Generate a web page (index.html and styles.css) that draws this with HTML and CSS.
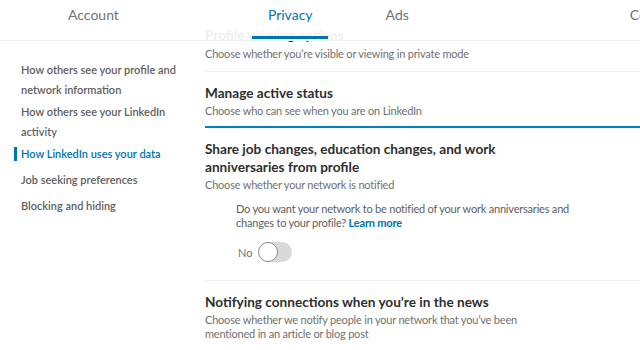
FILE: index.html
```html
<!DOCTYPE html>
<html lang="en">
<head>
  <meta charset="UTF-8">
  <title>Settings &amp; Privacy</title>
  <link rel="stylesheet" href="styles.css">
</head>
<body>
  <div class="tabs">
    <span class="tab tab-account">Account</span>
    <span class="tab tab-privacy active">Privacy</span>
    <span class="tab tab-ads">Ads</span>
    <span class="tab tab-comm">Communications</span>
  </div>
  <div class="page">
    <ul class="side-nav">
      <li>How others see your profile and network information</li>
      <li>How others see your LinkedIn activity</li>
      <li class="current">How LinkedIn uses your data</li>
      <li>Job seeking preferences</li>
      <li>Blocking and hiding</li>
    </ul>
    <div class="settings">
      <div class="setting">
        <div class="setting-title">Profile viewing options</div>
        <div class="setting-sub">Choose whether you’re visible or viewing in private mode</div>
      </div>
      <div class="setting">
        <div class="setting-title">Manage active status</div>
        <div class="setting-sub">Choose who can see when you are on LinkedIn</div>
      </div>
      <div class="setting open">
        <div class="setting-title">Share job changes, education changes, and work anniversaries from profile</div>
        <div class="setting-sub">Choose whether your network is notified</div>
        <div class="setting-body">
          <p class="question">Do you want your network to be notified of your work anniversaries and changes to your profile? <a href="#" class="learn">Learn more</a></p>
          <label class="toggle-row">
            <span class="toggle-label">No</span>
            <span class="toggle"><span class="knob"></span></span>
          </label>
        </div>
      </div>
      <div class="setting">
        <div class="setting-title">Notifying connections when you’re in the news</div>
        <div class="setting-sub">Choose whether we notify people in your network that you’ve been mentioned in an article or blog post</div>
      </div>
    </div>
  </div>
</body>
</html>
```

FILE: styles.css
```css
body {
  margin: 0;
  background: #fff;
  font-family: 'Lato', 'Liberation Sans', sans-serif;
  overflow: hidden;
}

/* top tab bar, sits over the scrolled content */
.tabs {
  position: absolute;
  top: 0;
  left: 0;
  right: 0;
  height: 40px;
  background: rgba(255,255,255,0.92);
  border-bottom: 1px solid #eef0f2;
  display: flex;
  align-items: flex-start;
  padding-left: 68px;
  white-space: nowrap;
  z-index: 2;
  font-size: 14px;
  color: #737373;
}
.tab {
  position: relative;
  height: 40px;
  line-height: 29px;
}
.tab-privacy { margin-left: 149px; }
.tab-ads { margin-left: 73px; }
.tab-comm { margin-left: 221px; }
.tab.active {
  color: #0073b1;
}
.tab.active::after {
  content: '';
  position: absolute;
  left: -16px;
  right: -15px;
  bottom: 1px;
  height: 3px;
  background: #0073b1;
}

.page {
  display: flex;
}

.side-nav {
  list-style: none;
  margin: 0;
  padding: 59px 0 0 0;
  width: 200px;
  flex: none;
}
.side-nav li {
  padding: 1px 10px 1px 21px;
  font-size: 11px;
  line-height: 20px;
  font-weight: 600;
  color: #5e5e5e;
  position: relative;
}
.side-nav li.current,
.side-nav li.current ~ li {
  margin-bottom: 4px;
}
.side-nav li.current {
  color: #0073b1;
}
.side-nav li.current::before {
  content: '';
  position: absolute;
  left: 14px;
  top: 4px;
  bottom: 4px;
  width: 3px;
  background: #0073b1;
}

.settings {
  flex: 1;
  padding-top: 14px;
  margin-left: 5px;
}
.setting {
  padding: 12px 0 10px;
  border-bottom: 1px solid #eceef0;
}
.setting:first-child .setting-sub {
  margin-top: 3px;
}
.setting:nth-child(2) {
  border-bottom: 2px solid #0084bf;
  padding-bottom: 8px;
}
.setting-title {
  max-width: 355px;
  font-size: 13.6px;
  line-height: 18px;
  font-weight: 700;
  color: #2e2e2e;
}
.setting-sub {
  max-width: 330px;
  margin-top: 2px;
  font-size: 11px;
  letter-spacing: -0.2px;
  line-height: 14px;
  color: #707070;
}
.setting.open {
  padding-bottom: 18px;
}
.setting-body {
  margin: 10px 0 0 31px;
  width: 350px;
}
.question {
  margin: 0;
  font-size: 11px;
  letter-spacing: -0.2px;
  line-height: 14px;
  color: #5e5e5e;
}
.learn {
  color: #0073b1;
  font-weight: 700;
  text-decoration: none;
}
.toggle-row {
  display: flex;
  align-items: center;
  gap: 6px;
  margin: 12px 0 0 2px;
}
.toggle-label {
  font-size: 11px;
  color: #737373;
}
.toggle {
  width: 34px;
  height: 20px;
  border-radius: 10px;
  background: #d9d9d9;
  position: relative;
}
.knob {
  position: absolute;
  left: 0;
  top: 0;
  width: 18px;
  height: 18px;
  border-radius: 50%;
  background: #fff;
  border: 1px solid #8c8c8c;
}
```
